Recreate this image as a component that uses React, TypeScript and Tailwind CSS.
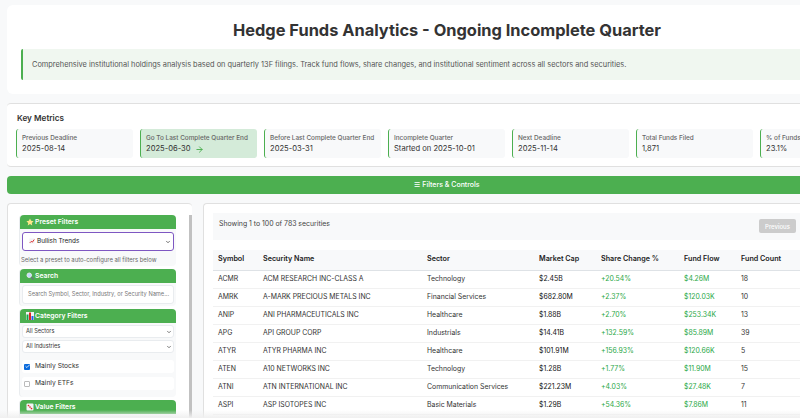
import type { ReactNode } from 'react';
import { ArrowRight, Check, ChevronDown } from 'lucide-react';

const metrics = [
  { label: 'Previous Deadline', value: '2025-08-14' },
  { label: 'Go To Last Complete Quarter End', value: '2025-06-30', active: true },
  { label: 'Before Last Complete Quarter End', value: '2025-03-31' },
  { label: 'Incomplete Quarter', value: 'Started on 2025-10-01' },
  { label: 'Next Deadline', value: '2025-11-14' },
  { label: 'Total Funds Filed', value: '1,871' },
  { label: '% of Funds Filed', value: '23.1%' },
];

const rows = [
  ['ACMR', 'ACM RESEARCH INC-CLASS A', 'Technology', '$2.45B', '+20.54%', '$4.26M', '18'],
  ['AMRK', 'A-MARK PRECIOUS METALS INC', 'Financial Services', '$682.80M', '+2.37%', '$120.03K', '10'],
  ['ANIP', 'ANI PHARMACEUTICALS INC', 'Healthcare', '$1.88B', '+2.70%', '$253.34K', '13'],
  ['APG', 'API GROUP CORP', 'Industrials', '$14.41B', '+132.59%', '$85.89M', '39'],
  ['ATYR', 'ATYR PHARMA INC', 'Healthcare', '$101.91M', '+156.93%', '$120.66K', '5'],
  ['ATEN', 'A10 NETWORKS INC', 'Technology', '$1.28B', '+1.77%', '$11.90M', '15'],
  ['ATNI', 'ATN INTERNATIONAL INC', 'Communication Services', '$221.23M', '+4.03%', '$27.48K', '7'],
  ['ASPI', 'ASP ISOTOPES INC', 'Basic Materials', '$1.29B', '+54.36%', '$7.86M', '11'],
];

function Star() {
  return (
    <svg viewBox="0 0 16 16" className="w-[8px] h-[8px]">
      <path d="M8 1l2.2 4.6 5 .7-3.6 3.5.9 5L8 12l-4.5 2.8.9-5L.8 6.3l5-.7z" fill="#fde68a" />
    </svg>
  );
}

function Lens() {
  return (
    <svg viewBox="0 0 16 16" className="w-[8px] h-[8px]">
      <circle cx="6.5" cy="6.5" r="4.5" fill="#bfdbfe" stroke="#e5e7eb" strokeWidth="2" />
      <path d="M10 10l5 5" stroke="#6b7280" strokeWidth="2.5" />
    </svg>
  );
}

function Bars() {
  return (
    <svg viewBox="0 0 16 16" className="w-[8px] h-[8px]">
      <rect width="16" height="16" fill="#f3f4f6" />
      <rect x="1" y="5" width="4" height="11" fill="#16a34a" />
      <rect x="6" y="1" width="4" height="15" fill="#dc2626" />
      <rect x="11" y="8" width="4" height="8" fill="#2563eb" />
    </svg>
  );
}

function Dice() {
  return (
    <svg viewBox="0 0 16 16" className="w-[8px] h-[8px]">
      <rect x="1" y="1" width="14" height="14" rx="2" fill="#f3f4f6" />
      <circle cx="5" cy="5" r="1.7" fill="#dc2626" />
      <circle cx="8" cy="8" r="1.7" fill="#dc2626" />
      <circle cx="11" cy="11" r="1.7" fill="#dc2626" />
    </svg>
  );
}

function Trend() {
  return (
    <svg viewBox="0 0 16 16" className="w-[6px] h-[6px] shrink-0">
      <rect x="1" y="1" width="14" height="14" fill="#f3f4f6" />
      <path d="M2 13l4-4 3 2 5-7" fill="none" stroke="#dc2626" strokeWidth="2.5" />
    </svg>
  );
}

function Section({ icon, title, children, tail }: { icon: ReactNode; title: string; children: ReactNode; tail?: string }) {
  return (
    <div className={`shrink-0 bg-[#f8f9fa] rounded-[4px] border-l border-[#e9ecef] ${tail}`}>
      <div className="h-[14px] bg-[#4caf50] rounded-t-[4px] flex items-center pl-[6px] text-[6.8px] font-semibold text-white">
        {icon}
        <span className="ml-[1px]">{title}</span>
      </div>
      {children}
    </div>
  );
}

function Pick({ label }: { label: string }) {
  return (
    <div className="h-[13px] mx-[2px] bg-white border border-[#e9ecef] rounded-[3px] flex items-center justify-between pl-[3px] pr-[1px] text-[5.6px] text-[#333]">
      {label}
      <ChevronDown className="w-[6px] h-[6px] text-[#333]" strokeWidth={2.5} />
    </div>
  );
}

export default function App() {
  return (
    <div className="w-[800px] h-[418px] overflow-hidden relative bg-[#f8f9fa] font-['Inter',sans-serif]">
      <div className="w-[880px] ml-[7px] pt-[5px]">
        <div className="h-[89px] bg-white rounded-[6px] pt-[13px] px-[14px]">
          <h1 className="text-[16.4px] leading-[24px] font-bold text-[#333] text-center">Hedge Funds Analytics - Ongoing Incomplete Quarter</h1>
          <div className="mt-[7px] h-[31px] bg-[#f0f7f0] border-l-2 border-[#4caf50] rounded-[2px] flex items-center pl-[9px] text-[7.4px] text-[#555]">
            Comprehensive institutional holdings analysis based on quarterly 13F filings. Track fund flows, share changes, and institutional sentiment across all sectors and securities.
          </div>
        </div>

        <div className="mt-[9px] h-[64px] bg-white border-y border-[#e0e0e0] rounded-[4px] pt-[9px] px-[9px]">
          <h2 className="pl-[1px] text-[8.2px] leading-[10px] font-semibold text-[#333]">Key Metrics</h2>
          <div className="mt-[6px] flex gap-[7px]">
            {metrics.map((m) => (
              <div
                key={m.label}
                className={`w-[117px] h-[29px] shrink-0 rounded-[3px] border-l-[1.5px] border-[#4caf50] pl-[5px] pt-[5px] ${m.active ? 'bg-[#d4ebd9]' : 'bg-[#f8f9fa]'}`}
              >
                <div className="text-[6.4px] leading-[8px] font-medium text-[#666] whitespace-nowrap">{m.label}</div>
                <div className="mt-[2px] text-[7.6px] leading-[10px] text-[#333] flex items-center gap-[4px]">
                  {m.value}
                  {m.active && <ArrowRight className="w-[9px] h-[9px] text-[#4caf50]" strokeWidth={2.5} />}
                </div>
              </div>
            ))}
          </div>
        </div>

        <div className="mt-[9px] h-[18px] bg-[#4caf50] rounded-[4px] flex items-center justify-center text-[7px] font-medium text-white">
          ☰ Filters &amp; Controls
        </div>

        <div className="mt-[9px] flex gap-[11px] items-start">
          <div className="w-[185px] h-[230px] shrink-0 bg-white border-t border-l border-[#e0e0e0] rounded-[4px] pt-[11px] pl-[11px] flex overflow-hidden">
            <div className="w-[157px] shrink-0 flex flex-col gap-[3px]">
              <Section icon={<Star />} title="Preset Filters" tail="h-[51px]">
                <div className="mt-[3px] h-[19px] mx-[2px] bg-white border border-[#7e57c2] rounded-[3px] flex items-center justify-between pl-[6px] pr-[2px] text-[6.4px] text-[#222]">
                  <span className="flex items-center gap-[2px]"><Trend />Bullish Trends</span>
                  <ChevronDown className="w-[6px] h-[6px]" strokeWidth={2.5} />
                </div>
                <div className="mt-[5px] pl-[1px] text-[5.9px] leading-[8px] text-[#666] whitespace-nowrap">Select a preset to auto-configure all filters below</div>
              </Section>
              <Section icon={<Lens />} title="Search" tail="h-[37px]">
                <div className="mt-[2px] h-[19px] mx-[2px] bg-white border border-[#e9ecef] rounded-[3px] flex items-center pl-[5px] text-[5.7px] text-[#777] whitespace-nowrap">
                  Search Symbol, Sector, Industry, or Security Name...
                </div>
              </Section>
              <Section icon={<Bars />} title="Category Filters" tail="h-[88px]">
                <div className="pt-[2px] flex flex-col gap-[2px]">
                  <Pick label="All Sectors" />
                  <Pick label="All Industries" />
                </div>
                <div className="mt-[7px] flex flex-col gap-[4px]">
                  {[{ label: 'Mainly Stocks', on: true }, { label: 'Mainly ETFs', on: false }].map((c) => (
                    <div key={c.label} className="h-[13px] mx-[2px] bg-white rounded-[3px] flex items-center gap-[5px] pl-[2px] text-[6.7px] text-[#333]">
                      {c.on ? (
                        <span className="w-[6px] h-[6px] rounded-[1px] bg-[#0b6bdc] flex items-center justify-center">
                          <Check className="w-[5px] h-[5px] text-white" strokeWidth={4} />
                        </span>
                      ) : (
                        <span className="w-[6px] h-[6px] rounded-[1px] border border-[#bbb]" />
                      )}
                      {c.label}
                    </div>
                  ))}
                </div>
              </Section>
              <Section icon={<Dice />} title="Value Filters" tail="h-[40px]">
                <div className="mt-[2px] h-[19px] mx-[2px] bg-white border border-[#e9ecef] rounded-[3px]" />
              </Section>
            </div>
            <div className="ml-[13px] w-[4px] shrink-0 bg-[#c1c1c1]" />
          </div>

          <div className="w-[677px] h-[230px] shrink-0 bg-white border-t border-l border-[#e0e0e0] rounded-[4px] pt-[9px] pl-[9px] pr-[4px]">
            <div className="h-[27px] bg-[#f8f9fa] flex justify-between pl-[6px] pr-[80px]">
              <span className="pt-[6px] text-[6.9px] leading-[10px] text-[#444]">Showing 1 to 100 of 783 securities</span>
              <span className="mt-[6px] w-[37px] h-[14px] bg-[#cccccc] rounded-[2px] flex items-center justify-center text-[6px] font-medium text-white">Previous</span>
            </div>
            <table className="mt-[10px] table-fixed border-collapse w-[663px] text-[6.9px]">
              <colgroup>
                <col className="w-[45px]" />
                <col className="w-[164px]" />
                <col className="w-[112px]" />
                <col className="w-[62px]" />
                <col className="w-[83px]" />
                <col className="w-[57px]" />
                <col />
              </colgroup>
              <thead>
                <tr className="h-[20px] bg-[#f8f9fa] border-b border-[#dee2e6] text-left text-[7.2px] text-[#222]">
                  {['Symbol', 'Security Name', 'Sector', 'Market Cap', 'Share Change %', 'Fund Flow', 'Fund Count'].map((h) => (
                    <th key={h} className="px-[5px] font-semibold whitespace-nowrap">{h}</th>
                  ))}
                </tr>
              </thead>
              <tbody>
                {rows.map((r) => (
                  <tr key={r[0]} className="h-[18px] border-b border-[#f1f1f1] text-[#333]">
                    <td className="px-[5px]">{r[0]}</td>
                    <td className="px-[5px] whitespace-nowrap">{r[1]}</td>
                    <td className="px-[5px] whitespace-nowrap">{r[2]}</td>
                    <td className="px-[5px] text-[#111]">{r[3]}</td>
                    <td className="px-[5px] text-[#28a745]">{r[4]}</td>
                    <td className="px-[5px] text-[#28a745]">{r[5]}</td>
                    <td className="px-[5px]">{r[6]}</td>
                  </tr>
                ))}
              </tbody>
            </table>
          </div>
        </div>
      </div>
      <div className="absolute bottom-0 left-0 right-0 h-[8px] bg-gradient-to-t from-[#f0f0f0] to-transparent" />
    </div>
  );
}
